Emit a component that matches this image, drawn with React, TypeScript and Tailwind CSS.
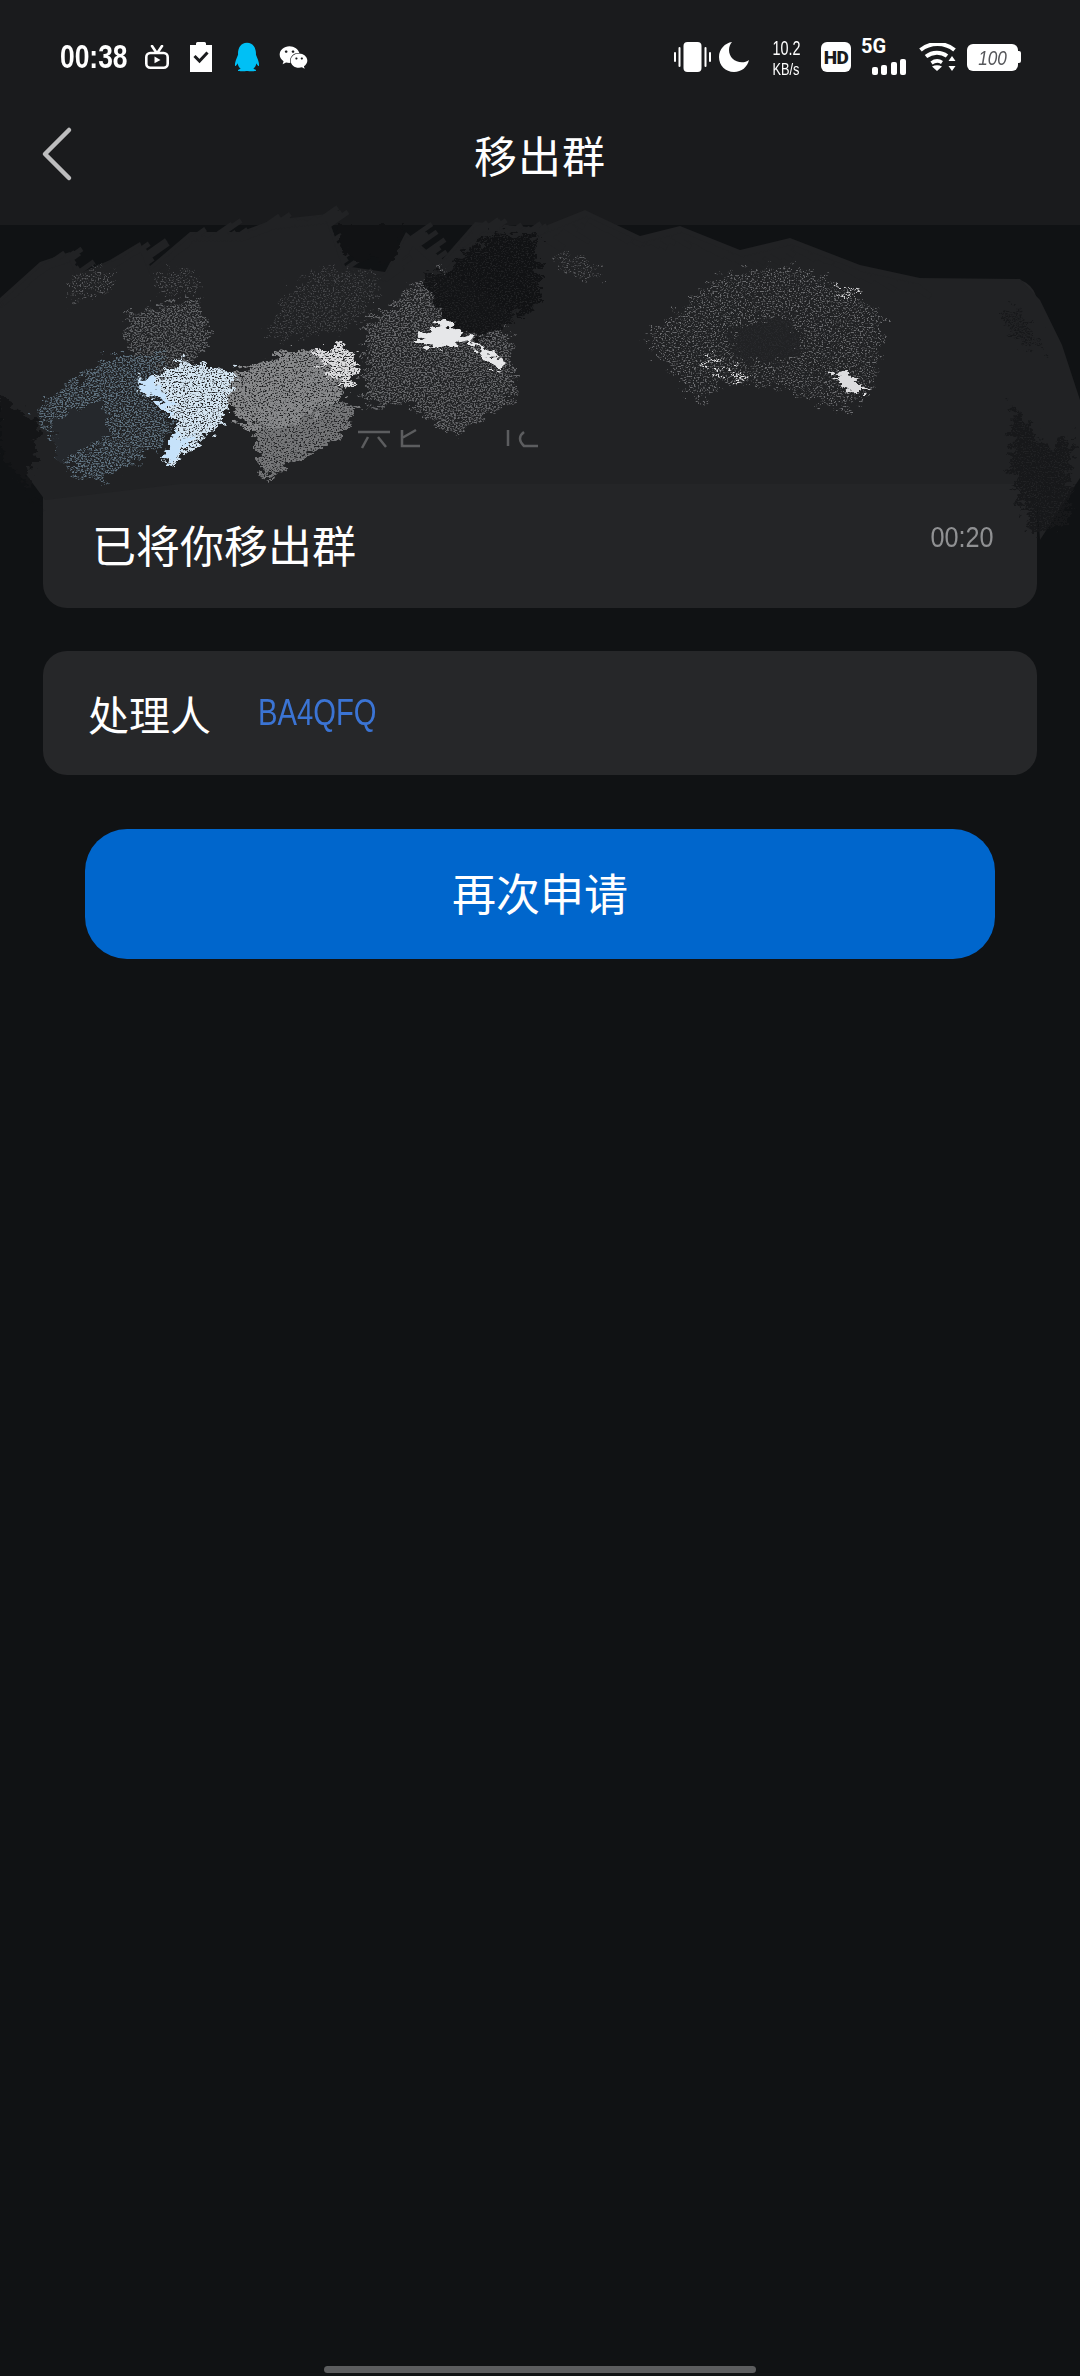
import { FaWeixin } from "react-icons/fa";
import { RiQqFill } from "react-icons/ri";

type Pt = [number, number];

// tiny seeded random so the scribble stays the same on every render
let seed = 7;
const rnd = () => {
  seed = (seed * 16807) % 2147483647;
  return seed / 2147483647;
};

const fringe = (edge: Pt[], angle: number) => {
  const a = (angle * Math.PI) / 180;
  let d = "";
  for (let i = 1; i < edge.length; i++) {
    const [x1, y1] = edge[i - 1];
    const [x2, y2] = edge[i];
    const steps = Math.ceil(Math.hypot(x2 - x1, y2 - y1) / 4);
    for (let s = 0; s < steps; s++) {
      const x = x1 + ((x2 - x1) * s) / steps;
      const y = y1 + ((y2 - y1) * s) / steps;
      const l = 2 + rnd() * rnd() * 34;
      d += `M${x.toFixed(1)} ${(y + 8).toFixed(1)}L${(x + Math.cos(a) * l).toFixed(1)} ${(y + 8 + Math.sin(a) * l).toFixed(1)}`;
    }
  }
  return d;
};

const topLeft: Pt[] = [[0, 298], [40, 262], [70, 252], [78, 274], [110, 260], [140, 242], [150, 266], [190, 232], [240, 232], [272, 220], [327, 214], [345, 266], [385, 272], [406, 232], [440, 262], [475, 222], [517, 226], [540, 228]];
const topRight: Pt[] = [[540, 228], [585, 210], [640, 236], [680, 226], [740, 250], [790, 238], [860, 265], [920, 278]];
const base: Pt[] = [...topLeft, ...topRight, [1020, 279], [1040, 300], [1062, 345], [1080, 400], [1080, 478], [1040, 540], [1036, 484], [180, 484], [45, 500], [8, 450], [0, 400]];

type Patch = { poly: Pt[]; color: string; look: "solid" | "dense" | "mid" | "sparse" };

const patches: Patch[] = [
  { poly: [[335, 226], [404, 226], [392, 262], [345, 258]], color: "#111214", look: "solid" },
  { poly: [[445, 270], [490, 232], [540, 236], [540, 300], [522, 320], [470, 285]], color: "#111214", look: "dense" },
  { poly: [[0, 395], [40, 425], [28, 490], [45, 515], [0, 450]], color: "#141517", look: "solid" },
  { poly: [[80, 272], [118, 268], [112, 290], [64, 302]], color: "#5a5b5e", look: "sparse" },
  { poly: [[150, 276], [185, 266], [206, 288], [162, 298]], color: "#505154", look: "sparse" },
  { poly: [[125, 316], [200, 296], [212, 340], [175, 380], [130, 358]], color: "#636568", look: "mid" },
  { poly: [[295, 284], [325, 264], [385, 280], [352, 330], [262, 340]], color: "#47484b", look: "sparse" },
  { poly: [[36, 408], [100, 360], [168, 350], [150, 396], [172, 425], [158, 448], [97, 482], [64, 466]], color: "#5f7280", look: "mid" },
  { poly: [[50, 420], [105, 398], [108, 436], [60, 462]], color: "#25282c", look: "solid" },
  { poly: [[254, 420], [300, 395], [355, 404], [350, 428], [282, 470], [268, 482], [254, 450]], color: "#757678", look: "dense" },
  { poly: [[220, 380], [290, 350], [322, 350], [345, 394], [290, 426], [240, 428]], color: "#88898b", look: "dense" },
  { poly: [[134, 386], [182, 360], [236, 372], [222, 422], [174, 464], [162, 462], [178, 425], [154, 396]], color: "#d4e5f2", look: "dense" },
  { poly: [[134, 386], [152, 376], [172, 408], [180, 442], [200, 432], [170, 462], [162, 460], [178, 425], [154, 396]], color: "#c6e2fa", look: "solid" },
  { poly: [[318, 352], [344, 342], [360, 366], [348, 388], [328, 376]], color: "#dcdcde", look: "dense" },
  { poly: [[366, 322], [440, 268], [512, 336], [514, 398], [452, 436], [406, 402], [366, 408]], color: "#68696c", look: "mid" },
  { poly: [[425, 272], [470, 276], [515, 320], [480, 340], [440, 318]], color: "#131416", look: "dense" },
  { poly: [[416, 338], [445, 320], [500, 360], [490, 362], [470, 342], [428, 348]], color: "#e6e7e9", look: "solid" },
  { poly: [[490, 350], [503, 362], [501, 370], [490, 366]], color: "#e6e6e8", look: "solid" },
  { poly: [[645, 340], [720, 274], [800, 266], [885, 314], [872, 392], [845, 412], [785, 388], [722, 382], [702, 404]], color: "#6e6f72", look: "sparse" },
  { poly: [[730, 330], [785, 314], [805, 350], [770, 366], [735, 358]], color: "#232427", look: "mid" },
  { poly: [[702, 356], [745, 375], [742, 380], [702, 366]], color: "#e4e4e6", look: "mid" },
  { poly: [[830, 374], [846, 370], [868, 393], [850, 393]], color: "#dcdcde", look: "solid" },
  { poly: [[838, 286], [858, 291], [862, 298], [842, 294]], color: "#cfcfd1", look: "mid" },
  { poly: [[1012, 404], [1050, 450], [1072, 434], [1068, 526], [1030, 534], [1010, 470]], color: "#17181a", look: "dense" },
  { poly: [[1002, 312], [1020, 308], [1046, 356], [1012, 338]], color: "#17181a", look: "mid" },
  { poly: [[552, 258], [580, 254], [606, 278], [572, 278]], color: "#5a5b5e", look: "sparse" },
];

const Grain = ({ id, gain, offset, warp }: { id: string; gain: number; offset: number; warp: number }) => (
  <filter id={id} x="-30%" y="-30%" width="160%" height="160%" colorInterpolationFilters="sRGB">
    <feTurbulence type="fractalNoise" baseFrequency="0.09 0.16" numOctaves="3" seed="4" result="warp" />
    <feDisplacementMap in="SourceGraphic" in2="warp" scale={warp} xChannelSelector="R" yChannelSelector="G" result="shape" />
    <feTurbulence type="fractalNoise" baseFrequency="0.55 0.8" numOctaves="2" seed="11" result="noise" />
    <feColorMatrix in="noise" type="matrix" values={`0 0 0 0 0 0 0 0 0 0 0 0 0 0 0 0 0 0 ${gain} ${offset}`} result="mask" />
    <feComposite in="shape" in2="mask" operator="in" />
  </filter>
);

const Scribble = () => {
  seed = 7;
  return (
    <svg className="absolute left-0 top-0 pointer-events-none" width={1080} height={560} viewBox="0 0 1080 560">
      <defs>
        <Grain id="dense" gain={6} offset={-1.9} warp={26} />
        <Grain id="mid" gain={5} offset={-2.2} warp={30} />
        <Grain id="sparse" gain={5} offset={-2.6} warp={30} />
        <filter id="solid" x="-30%" y="-30%" width="160%" height="160%" colorInterpolationFilters="sRGB">
          <feTurbulence type="fractalNoise" baseFrequency="0.09 0.16" numOctaves="3" seed="4" result="warp" />
          <feDisplacementMap in="SourceGraphic" in2="warp" scale={20} xChannelSelector="R" yChannelSelector="G" />
        </filter>
      </defs>
      <polygon points={base.map((p) => p.join(",")).join(" ")} fill="#212224" />
      <path d={fringe(topLeft, -35)} stroke="#212224" strokeWidth={5} fill="none" />
      <path d={fringe(topRight, 32)} stroke="#212224" strokeWidth={5} fill="none" />
      {patches.map((p, i) => (
        <polygon key={i} points={p.poly.map((q) => q.join(",")).join(" ")} fill={p.color} filter={`url(#${p.look})`} />
      ))}
      {/* what is left of the covered text */}
      <path d="M358 432h32M368 437l-6 11M378 437l8 10M402 430v16h18M402 438l14-8M508 430v16M524 432q-8 6 0 14h14" stroke="#5c5d5f" strokeWidth={2.5} fill="none" />
    </svg>
  );
};

const TvIcon = () => (
  <svg width="24" height="24" viewBox="0 0 24 24" fill="none" stroke="#fff" strokeWidth="2.6">
    <rect x="1.3" y="8" width="21.4" height="14.7" rx="4" />
    <path d="M7 1l4 6M17 1l-4 6" strokeLinecap="round" />
    <path d="M9.5 11.5l6 3.4-6 3.4z" fill="#fff" stroke="none" />
  </svg>
);

const ClipboardIcon = () => (
  <svg width="22" height="30" viewBox="0 0 22 30">
    <path d="M0 3h6V1.5A1.5 1.5 0 0 1 7.500 0h7A1.500 1.500 0 0 1 16 1.500V3h6v27H0z" fill="#fff" />
    <path d="M4.500 14l5 5 8-8.500" fill="none" stroke="#1a1b1d" strokeWidth="3" />
  </svg>
);

const VibrateIcon = () => (
  <svg width="37" height="30" viewBox="0 0 37 30" fill="#fff">
    <rect x="9.500" y="0" width="18" height="30" rx="4" />
    <rect x="0" y="10" width="2" height="10" rx="1" />
    <rect x="4.500" y="5" width="2" height="20" rx="1" />
    <rect x="30.500" y="5" width="2" height="20" rx="1" />
    <rect x="35" y="10" width="2" height="10" rx="1" />
  </svg>
);

const MoonIcon = () => (
  <svg width="30" height="30" viewBox="0 0 30 30">
    <path d="M13 0C6 1 0 7 0 15c0 8.500 6.500 15 15 15 7.500 0 13.500-5 15-12-2 1.500-4.500 2.300-7 2.300C15.500 20.300 10 15 10 8c0-3 1-5.700 3-8z" fill="#fff" />
  </svg>
);

const HdIcon = () => (
  <div className="flex h-[30px] w-[30px] items-center justify-center rounded-[6px] bg-white font-['Roboto',sans-serif] text-[19px] leading-none font-black tracking-[-0.5px] text-[#1a1b1d]">
    HD
  </div>
);

const SignalIcon = () => (
  <div className="relative h-[36px] w-[45px]">
    <span className="absolute left-0 top-[-4px] font-['Roboto',sans-serif] text-[20px] leading-[22px] font-bold text-white">5G</span>
    <div className="absolute right-0 bottom-0 flex items-end gap-[3.500px]">
      <span className="h-[8px] w-[6px] rounded-[2px] bg-white" />
      <span className="h-[10px] w-[6px] rounded-[2px] bg-white" />
      <span className="h-[13px] w-[6px] rounded-[2px] bg-white" />
      <span className="h-[16px] w-[6px] rounded-[2px] bg-white" />
    </div>
  </div>
);

const WifiIcon = () => (
  <svg width="37" height="28" viewBox="0 0 37 28">
    <path d="M1.500 7C11 -1 26 -1 35.500 7" fill="none" stroke="#fff" strokeWidth="4" />
    <path d="M7 13.500c6.500-5 15-5 21 -.5" fill="none" stroke="#fff" strokeWidth="4" />
    <path d="M12.500 20c3.500-2.500 7.500-2.500 10.500-.5" fill="none" stroke="#fff" strokeWidth="3.600" />
    <path d="M18 28l-5-4.500q5-2.500 10 0z" fill="#fff" />
    <path d="M33 13l3.500 5h-7zM33 28l-3.500-5h7z" fill="#fff" />
  </svg>
);

const Battery = () => (
  <div className="flex items-center">
    <div className="flex h-[27px] w-[51px] items-center justify-center rounded-[6px] bg-white font-['Liberation_Sans',sans-serif] text-[21px] leading-none text-[#55565a] italic">
      <span className="scale-x-[0.82]">100</span>
    </div>
    <div className="h-[12px] w-[3px] rounded-r-[2px] bg-white" />
  </div>
);

export default function App() {
  return (
    <div className="relative flex h-[2376px] w-[1080px] flex-col overflow-hidden bg-[#101214] font-['Noto_Sans_CJK_SC','Noto_Sans',sans-serif]">
      <header className="h-[225px] shrink-0 bg-[#1a1b1d]">
        <div className="flex items-center justify-between pl-[60px] pr-[59px] pt-[37px]">
          <div className="flex items-center">
            <span className="w-[68px] origin-left scale-x-[0.8] font-['Liberation_Sans',sans-serif] text-[33px] leading-[40px] font-bold whitespace-nowrap text-white">00:38</span>
            <div className="ml-[17px] flex items-center gap-[21px]">
              <TvIcon />
              <ClipboardIcon />
              <RiQqFill className="ml-[-3px] text-[#00c0f5]" size={34} />
              <FaWeixin className="ml-[-6px] text-white" size={29} />
            </div>
          </div>
          <div className="flex items-center">
            <VibrateIcon />
            <div className="ml-[8px]"><MoonIcon /></div>
            <div className="ml-[22px] flex w-[30px] flex-col items-center whitespace-nowrap font-['Liberation_Sans',sans-serif] text-white">
              <span className="scale-x-[0.72] text-[20px] leading-[20px]">10.2</span>
              <span className="mt-[4px] scale-x-[0.8] text-[16px] leading-[15px]">KB/s</span>
            </div>
            <div className="ml-[20px]"><HdIcon /></div>
            <div className="ml-[10px]"><SignalIcon /></div>
            <div className="ml-[13px]"><WifiIcon /></div>
            <div className="ml-[11px]"><Battery /></div>
          </div>
        </div>
        <div className="relative mt-[47px] flex h-[60px] items-center justify-center">
          <svg className="absolute left-[38px] top-[2px]" width="36" height="56" viewBox="0 0 36 56" fill="none">
            <path d="M31 4L7 28l24 24" stroke="#bdbdbe" strokeWidth="4.500" strokeLinecap="round" strokeLinejoin="round" />
          </svg>
          <span className="text-[43px] leading-[60px] tracking-[1px] text-white">移出群</span>
        </div>
      </header>

      <main className="flex flex-1 flex-col px-[43px] pt-[54px]">
        <section className="relative h-[329px] rounded-[24px] bg-[#242527]">
          <div className="absolute left-[130px] right-[180px] top-[204px] h-px bg-[#3a3b3d]" />
          <span className="absolute left-[49px] top-[234px] text-[44px] leading-[62px] text-white">已将你移出群</span>
          <span className="absolute right-[43px] top-[240px] origin-right scale-x-[0.87] font-['Liberation_Sans',sans-serif] text-[29px] leading-[36px] text-[#909193]">00:20</span>
        </section>

        <section className="mt-[43px] flex h-[124px] items-center rounded-[24px] bg-[#262729] pl-[45px]">
          <span className="text-[41px] leading-[60px] text-white">处理人</span>
          <span className="ml-[47px] origin-left scale-x-[0.79] font-['Liberation_Sans',sans-serif] text-[37px] leading-[40px] text-[#3b74d4]">BA4QFQ</span>
        </section>

        <button className="mx-[42px] mt-[54px] flex h-[130px] items-center justify-center rounded-[42px] bg-[#0066cc] pb-[5px] text-[44px] leading-[60px] text-white">
          再次申请
        </button>

        <div className="mx-auto mb-[3px] mt-auto h-[7px] w-[432px] rounded-full bg-[#5c5d5f]" />
      </main>

      <Scribble />
    </div>
  );
}
